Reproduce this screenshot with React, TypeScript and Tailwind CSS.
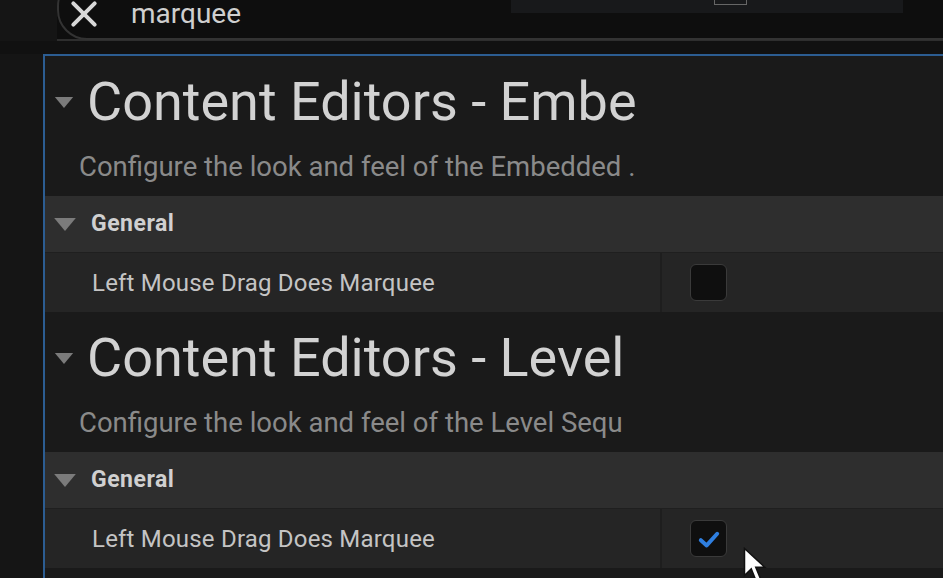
import React from "react";

const Tri = ({ cls }: { cls: string }) => (
  <svg className={cls} viewBox="0 0 20 12" fill="#7b7b7b">
    <path d="M0 0 L20 0 L10 12 Z" />
  </svg>
);

const Section = ({
  title,
  desc,
  checked,
}: {
  title: string;
  desc: string;
  checked: boolean;
}) => (
  <div className="flex flex-col">
    <div className="h-[140px] flex flex-col bg-[#1a1a1a]">
      <div className="flex items-start pt-[20px]">
        <Tri cls="w-[20px] h-[11px] ml-[9px] mt-[21px]" />
        <div className="ml-[13px] whitespace-nowrap text-[54px] leading-[52px] text-[#d2d2d2]">
          {title}
        </div>
      </div>
      <div className="ml-[34px] mt-[24px] whitespace-nowrap text-[27.5px] leading-[30px] text-[#8a8a8a]">
        {desc}
      </div>
    </div>
    <div className="h-[57px] bg-[#2e2e2e] flex items-center border-b border-[#1f1f1f]">
      <Tri cls="w-[22px] h-[13px] ml-[9px]" />
      <span className="ml-[15px] text-[23px] font-bold text-[#d0d0d0] tracking-[0.5px]">General</span>
    </div>
    <div className="h-[59px] bg-[#252525] flex">
      <div className="w-[617px] flex items-center pl-[47px] text-[24px] text-[#c4c4c4] tracking-[0.2px] border-r-2 border-[#1e1e1e]">
        Left Mouse Drag Does Marquee
      </div>
      <div className="flex items-center pl-[28px]">
        <div className="w-[37px] h-[37px] rounded-[6px] bg-[#0f0f0f] border border-[#3a3a3a] flex items-center justify-center">
          {checked && (
            <svg viewBox="0 0 24 24" className="w-[28px] h-[28px]" fill="none" stroke="#2f7fe0" strokeWidth="3.4" strokeLinecap="round" strokeLinejoin="round">
              <path d="M5 13 L10 17.5 L19 7.5" />
            </svg>
          )}
        </div>
      </div>
    </div>
  </div>
);

export default function App() {
  return (
    <div
      className="w-[943px] h-[578px] bg-[#151515] overflow-hidden relative flex flex-col"
      style={{ fontFamily: "Roboto, 'Noto Sans', sans-serif" }}
    >
      {/* top bar */}
      <div className="h-[41px] relative bg-[#0e0e0e] border-b-2 border-[#2e2e2e]">
        <div className="absolute left-0 top-0 w-[57px] h-[41px] bg-[#151515]" />
        <div className="absolute left-[57px] top-[-24px] w-[960px] h-[64px] rounded-[30px] border-2 border-[#333] bg-[#0e0e0e] flex items-end pb-[8px]">
          <svg viewBox="0 0 24 24" className="w-[32px] h-[32px] ml-[9px]" fill="none" stroke="#d8d8d8" strokeWidth="3" strokeLinecap="round">
            <path d="M4 4 L20 20 M20 4 L4 20" />
          </svg>
          <span className="ml-[31px] mb-[4px] text-[28px] leading-[24px] text-[#cfcfcf]">marquee</span>
        </div>
        <div className="absolute left-[511px] top-0 w-[392px] h-[13px] bg-[#18191b]">
          <div className="absolute left-[203px] top-0 w-[33px] h-[5px] border-b border-x border-[#666]" />
        </div>
      </div>
      <div className="h-[13px] bg-[#111]" />
      {/* panel */}
      <div className="flex-1 ml-[43px] border-l-2 border-t-2 border-[#2c5d92] bg-[#1a1a1a] flex flex-col">
        <Section
          title="Content Editors - Embe"
          desc="Configure the look and feel of the Embedded ."
          checked={false}
        />
        <Section
          title="Content Editors - Level"
          desc="Configure the look and feel of the Level Sequ"
          checked={true}
        />
      </div>
      {/* cursor */}
      <svg className="absolute left-[743px] top-[547px] w-[24px] h-[36px]" viewBox="0 0 16 24">
        <path d="M1 1 L1 19 L5.5 14.5 L8.5 22 L11.5 20.8 L8.5 13.5 L14.5 13.5 Z" fill="#ffffff" stroke="#111" strokeWidth="1" />
      </svg>
    </div>
  );
}
